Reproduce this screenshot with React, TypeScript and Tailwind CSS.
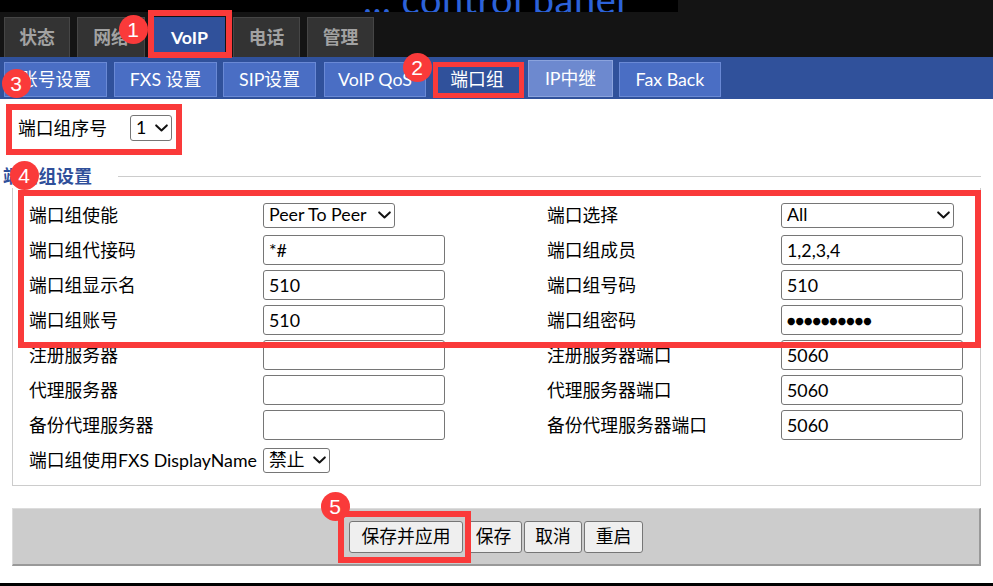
import React from "react";

const FONT = "font-['Lato','Noto_Sans_CJK_SC',sans-serif]";

function Chevron() {
  return (
    <svg width="13" height="8" viewBox="0 0 13 8" className="pointer-events-none absolute right-[4px] top-1/2 -translate-y-1/2">
      <path d="M1.2 1.4 L6.5 6.4 L11.8 1.4" fill="none" stroke="#111" strokeWidth="2" strokeLinecap="round" strokeLinejoin="round" />
    </svg>
  );
}

function Sel({ value, w, h = "h-[25px]" }: { value: string; w: string; h?: string }) {
  return (
    <div className={`relative inline-flex ${w} ${h}`}>
      <select
        defaultValue={value}
        className="appearance-none w-full h-full border border-[#767676] rounded-[3px] bg-white pl-[5px] pr-[20px] text-[17.8px] leading-none text-black outline-none"
      >
        <option value={value}>{value}</option>
      </select>
      <Chevron />
    </div>
  );
}

function Inp({ value, dots }: { value: string; dots?: boolean }) {
  return (
    <input
      type="text"
      readOnly
      defaultValue={value}
      className={`w-[182px] h-[30px] border border-[#767676] rounded-[3px] bg-white pl-[5px] text-black outline-none ${
        dots ? "font-['DejaVu_Sans',sans-serif] text-[9.6px] tracking-[0.1px]" : "text-[17.8px]"
      }`}
    />
  );
}

function Label({ children }: { children: React.ReactNode }) {
  return <span className="whitespace-nowrap text-[17.8px] leading-[24px] text-black">{children}</span>;
}

function TopTab({ label, active, cls }: { label: string; active?: boolean; cls: string }) {
  return (
    <div
      className={`${cls} h-[40px] flex items-center justify-center font-bold text-[17.8px] border border-b-0 ${
        active ? "bg-[#30519b] border-[#30519b] text-white" : "bg-[#333333] border-[#464646] text-[#a2a2a2]"
      }`}
    >
      {label}
    </div>
  );
}

function SubTab({ label, kind = "n", cls = "" }: { label: string; kind?: "n" | "a" | "h"; cls?: string }) {
  const k =
    kind === "a"
      ? "h-[35px] bg-[#30519b] border-[#30519b]"
      : kind === "h"
      ? "h-[37px] bg-[#6d89cf] border-[#8ba3dd]"
      : "h-[35px] bg-[#4a6ec4] border-[#6a89d5]";
  return (
    <div className={`${k} ${cls} border flex items-center justify-center text-white text-[17.8px] whitespace-nowrap`}>
      {label}
    </div>
  );
}

function Box({ x, y, w, h, t = 6 }: { x: number; y: number; w: number; h: number; t?: number }) {
  return (
    <div
      className="absolute pointer-events-none border-[#fa3a3a]"
      style={{ left: x, top: y, width: w, height: h, borderWidth: t, borderStyle: "solid" }}
    />
  );
}

function Badge({ cx, cy, n }: { cx: number; cy: number; n: string }) {
  return (
    <div
      className="absolute pointer-events-none w-[29px] h-[29px] rounded-full bg-[#fa3a3a] text-white flex items-center justify-center text-[21px] leading-none font-['Liberation_Sans',sans-serif]"
      style={{ left: cx - 14.5, top: cy - 14.5 }}
    >
      {n}
    </div>
  );
}

export default function App() {
  return (
    <div className={`relative w-[993px] h-[586px] overflow-hidden bg-white ${FONT}`}>
      {/* header */}
      <div className="bg-[#141414] h-[57px] flex flex-col">
        <div className="h-[12px] w-[678px] bg-black overflow-hidden flex">
          <span className="ml-[54px] mt-[-26px] text-[28px] leading-none text-[#1f8a6a] whitespace-nowrap">
            Host
          </span>
          <span className="ml-[250px] mt-[-20px] text-[38px] leading-none text-[#2c62d8] whitespace-nowrap tracking-[0.5px]">
            ... control panel
          </span>
        </div>
        <div className="flex items-end h-[45px]">
          <TopTab label="状态" cls="ml-[4px] w-[66px]" />
          <TopTab label="网络" cls="ml-[7px] w-[68px]" />
          <TopTab label="VoIP" active cls="ml-[9px] w-[71px]" />
          <TopTab label="电话" cls="ml-[8px] w-[67px]" />
          <TopTab label="管理" cls="ml-[7px] w-[67px]" />
        </div>
      </div>

      {/* sub tabs */}
      <div className="bg-[#30519b] h-[42px] flex items-end pb-[2px]">
        <SubTab label="账号设置" cls="ml-[4px] w-[103px]" />
        <SubTab label="FXS 设置" cls="ml-[7px] w-[103px]" />
        <SubTab label="SIP设置" cls="ml-[6px] w-[93px]" />
        <SubTab label="VoIP QoS" cls="ml-[8px] w-[102px]" />
        <SubTab label="端口组" kind="a" cls="ml-[7px] w-[88px]" />
        <SubTab label="IP中继" kind="h" cls="ml-[7px] w-[85px]" />
        <SubTab label="Fax Back" cls="ml-[6px] w-[102px]" />
      </div>

      {/* group index */}
      <div className="flex items-center pl-[18px] pt-[16px] h-[42px]">
        <Label>端口组序号</Label>
        <div className="ml-[23px] flex">
          <Sel value="1" w="w-[42px]" h="h-[26px]" />
        </div>
      </div>

      {/* heading */}
      <div className="mt-[23px] flex items-center h-[24px]">
        <span className="pl-[3px] w-[118px] font-bold text-[17.8px] leading-[24px] text-[#2f4f9a] whitespace-nowrap">
          端口组设置
        </span>
        <div className="flex-1 border-t border-[#cccccc] mr-[12px]" />
      </div>

      {/* settings box */}
      <div className="mx-[12px] border-x border-b border-[#cccccc] px-[16px] pt-[12px] pb-[10px]">
        <div className="grid grid-cols-[234px_284px_234px_181px] auto-rows-[30px] gap-y-[5px] items-center">
          <Label>端口组使能</Label>
          <div className="flex"><Sel value="Peer To Peer" w="w-[132px]" /></div>
          <Label>端口选择</Label>
          <div className="flex"><Sel value="All" w="w-[173px]" /></div>

          <Label>端口组代接码</Label>
          <Inp value="*#" />
          <Label>端口组成员</Label>
          <Inp value="1,2,3,4" />

          <Label>端口组显示名</Label>
          <Inp value="510" />
          <Label>端口组号码</Label>
          <Inp value="510" />

          <Label>端口组账号</Label>
          <Inp value="510" />
          <Label>端口组密码</Label>
          <Inp value="●●●●●●●●●●" dots />

          <Label>注册服务器</Label>
          <Inp value="" />
          <Label>注册服务器端口</Label>
          <Inp value="5060" />

          <Label>代理服务器</Label>
          <Inp value="" />
          <Label>代理服务器端口</Label>
          <Inp value="5060" />

          <Label>备份代理服务器</Label>
          <Inp value="" />
          <Label>备份代理服务器端口</Label>
          <Inp value="5060" />

          <Label>端口组使用FXS DisplayName</Label>
          <div className="flex"><Sel value="禁止" w="w-[67px]" /></div>
        </div>
      </div>

      {/* button bar */}
      <div className="mt-[22px] mx-[12px] h-[58px] bg-[#cccccc] border-t border-l border-t-[#dcdcdc] border-l-[#dcdcdc] border-b-2 border-r-2 border-b-[#999999] border-r-[#999999] flex items-center justify-center gap-[2px]">
        {[
          ["保存并应用", "w-[114px]"],
          ["保存", "w-[57px]"],
          ["取消", "w-[58px]"],
          ["重启", "w-[59px]"],
        ].map(([t, w]) => (
          <button
            key={t}
            className={`${w} h-[32px] bg-[#efefef] border border-[#767676] rounded-[3px] text-[17.8px] leading-none text-black`}
          >
            {t}
          </button>
        ))}
      </div>
      <div className="mt-[17px] h-[3px] bg-black" />

      {/* annotations */}
      <Box x={148} y={10} w={84} h={48} />
      <Box x={433} y={62} w={91} h={36} t={5} />
      <Box x={6} y={104} w={176} h={51} />
      <Box x={18} y={190} w={963} h={158} />
      <Box x={338} y={511} w={133} h={52} />
      <Badge cx={133} cy={29} n="1" />
      <Badge cx={417} cy={67} n="2" />
      <Badge cx={16} cy={83} n="3" />
      <Badge cx={24} cy={175} n="4" />
      <Badge cx={335} cy={506} n="5" />
    </div>
  );
}
